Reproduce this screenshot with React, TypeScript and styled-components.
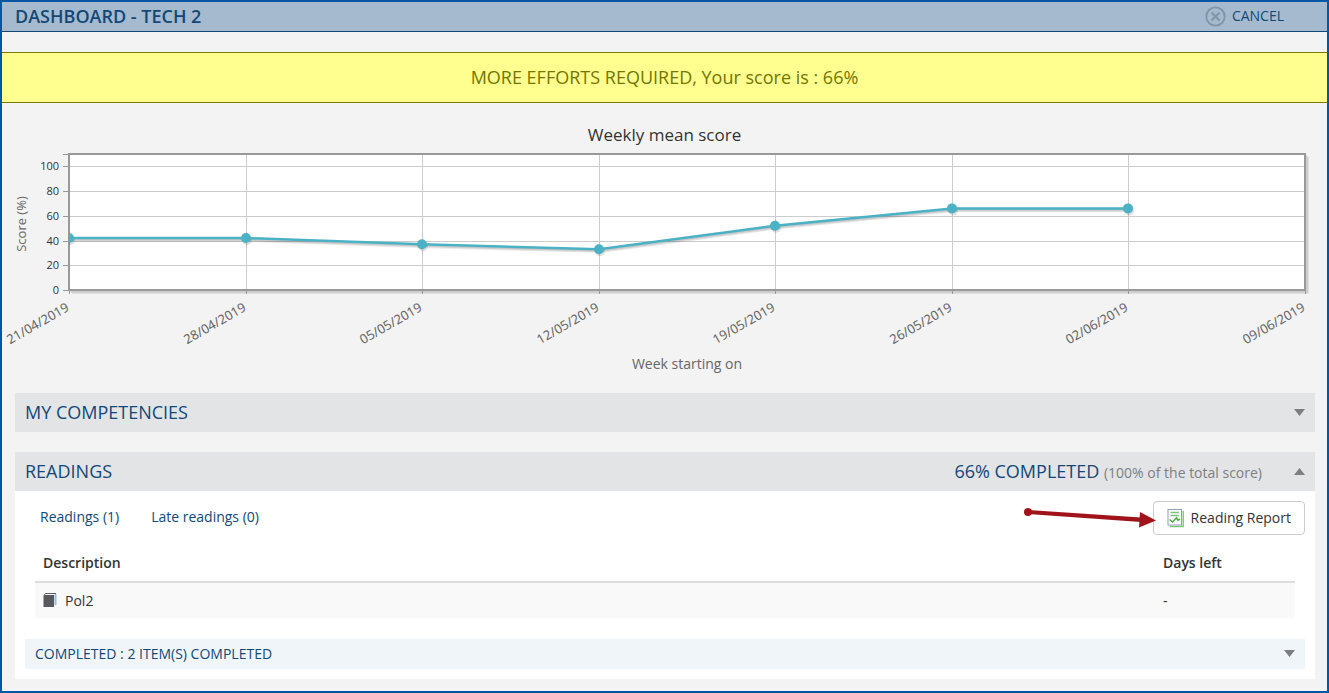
import React, { useLayoutEffect, useRef, useState } from "react";
import styled, { createGlobalStyle } from "styled-components";

const colors = {
  frame: "#0058a5",
  navy: "#124877",
  bar: "#a5bace",
  page: "#f3f3f3",
  section: "#e2e4e6",
  grid: "#cccccc",
  axis: "#999999",
  muted: "#7d7f82",
  text: "#333333",
  line: "#4bb2c5",
  arrow: "#a0131b",
};

const GlobalStyle = createGlobalStyle`
  *, *::before, *::after { box-sizing: border-box; }
  body {
    margin: 0;
    background: ${colors.page};
    color: ${colors.text};
    font-family: "Open Sans", "Noto Sans", sans-serif;
    font-size: 14px;
    line-height: 20px;
  }
  button { font: inherit; color: inherit; background: none; border: 0; padding: 0; cursor: pointer; }
  a { color: inherit; text-decoration: none; }
  svg { display: block; }
`;

const Page = styled.div`
  min-height: 100vh;
  border: 2px solid ${colors.frame};
`;

const TitleBar = styled.header`
  display: flex;
  align-items: center;
  justify-content: space-between;
  height: 30px;
  padding: 0 43px 1px 13px;
  background: ${colors.bar};
  border-bottom: 1px solid ${colors.navy};
  color: ${colors.navy};
`;

const Title = styled.h1`
  margin: 0;
  font-size: 18px;
  line-height: 26px;
  font-weight: 600;
`;

const CancelButton = styled.button`
  display: flex;
  align-items: center;
  gap: 6px;
`;

const ScoreBanner = styled.p`
  margin: 20px 0 0;
  padding: 12px;
  background: #ffff8f;
  border: solid #7a7a00;
  border-width: 1px 0;
  color: #757500;
  font-size: 18px;
  line-height: 25px;
  text-align: center;
`;

const ChartSection = styled.section`
  padding-top: 20px;
`;

const ChartTitle = styled.h2`
  margin: 0;
  font-size: 17px;
  line-height: 24px;
  font-weight: 400;
  text-align: center;
`;

const ChartCanvas = styled.svg`
  width: 100%;
  height: 230px;
`;

const Content = styled.main`
  padding: 16px 12px 12px 13px;
  display: flex;
  flex-direction: column;
  gap: 20px;
`;

const SectionHeader = styled.button`
  display: flex;
  align-items: center;
  gap: 32px;
  width: 100%;
  height: 39px;
  padding: 0 10px;
  background: ${colors.section};
  color: ${colors.navy};
  text-align: left;
`;

const SectionName = styled.span`
  flex: 1;
  padding-bottom: 2px;
  font-size: 18px;
  line-height: 24px;
`;

const SectionStatus = styled.span`
  font-size: 18px;
  line-height: 24px;

  small {
    font-size: 14px;
    color: ${colors.muted};
  }
`;

const PanelBody = styled.div`
  padding: 10px;
  background: #ffffff;
`;

const Toolbar = styled.div`
  position: relative;
  display: flex;
  align-items: center;
  justify-content: space-between;
`;

const Filters = styled.nav`
  display: flex;
  gap: 32px;
  padding: 0 0 2px 15px;
  color: ${colors.navy};
`;

const ReportButton = styled.button`
  display: flex;
  align-items: center;
  gap: 6px;
  height: 34px;
  padding: 0 13px;
  border: 1px solid #cccccc;
  border-radius: 4px;
  background: #ffffff;
`;

const Pointer = styled.svg`
  position: absolute;
  right: 148px;
  top: 4px;
`;

const TableWrap = styled.div`
  padding: 8px 10px 0;
`;

const Table = styled.table`
  width: 100%;
  border-collapse: collapse;
  table-layout: fixed;
`;

const HeadCell = styled.th<{ $width?: string }>`
  width: ${(p) => p.$width ?? "auto"};
  height: 39px;
  padding: 2px 8px 0;
  border-bottom: 2px solid #dddddd;
  font-weight: 600;
  text-align: left;
`;

const Cell = styled.td`
  height: 36px;
  padding: 0 8px;
  background: #f9f9f9;
`;

const ItemLink = styled.a`
  display: flex;
  align-items: center;
  gap: 8px;
`;

const CompletedBar = styled.button`
  display: flex;
  align-items: center;
  justify-content: space-between;
  width: 100%;
  height: 30px;
  margin-top: 21px;
  padding: 0 10px 1px;
  background: #f0f5fa;
  color: ${colors.navy};
`;

function Caret({ up = false }: { up?: boolean }) {
  return (
    <svg width="11" height="7" viewBox="0 0 11 7" fill={colors.muted} aria-hidden="true">
      <path d={up ? "M0 7L5.5 0L11 7z" : "M0 0H11L5.5 7z"} />
    </svg>
  );
}

function CancelIcon() {
  return (
    <svg width="21" height="21" viewBox="0 0 21 21" fill="none" stroke="#8394a5" aria-hidden="true">
      <circle cx="10.5" cy="10.5" r="9.2" strokeWidth="1.8" />
      <path d="M6.5 6.5L14.5 14.5M14.5 6.5L6.5 14.5" strokeWidth="2" />
    </svg>
  );
}

function ReportIcon() {
  return (
    <svg width="18" height="20" viewBox="0 0 18 20" fill="none" aria-hidden="true">
      <path d="M16.2 3V18.5H3" stroke="#7cc576" strokeWidth="1.4" />
      <rect x="1" y="1.5" width="13.5" height="15.5" fill="#ffffff" stroke="#93a0b3" />
      <path d="M3.5 4.5H12M3.5 7.5H12" stroke="#7cc576" strokeWidth="1.4" />
      <path d="M2.5 11.5L5.5 14L9.5 9.8L11 12.2L13 11.2" stroke="#4cae45" strokeWidth="1.5" />
    </svg>
  );
}

function BookIcon() {
  return (
    <svg width="14" height="15" viewBox="0 0 14 15" aria-hidden="true">
      <path d="M12.5 1V12" stroke="#8fc0e6" strokeWidth="2" />
      <path d="M1 2.5L2.5 .5H13" fill="none" stroke="#5c5e63" />
      <path d="M0.5 2.5L2 2H11V14H0.5z" fill="#58595e" />
    </svg>
  );
}

const weeks = ["21/04/2019", "28/04/2019", "05/05/2019", "12/05/2019", "19/05/2019", "26/05/2019", "02/06/2019", "09/06/2019"];
const scores = [42, 42, 37, 33, 52, 66, 66];
const ticks = [0, 20, 40, 60, 80, 100];

function ScoreChart() {
  const ref = useRef<SVGSVGElement>(null);
  const [width, setWidth] = useState(1200);

  useLayoutEffect(() => {
    const node = ref.current;
    if (!node) return;
    const measure = () => setWidth(node.getBoundingClientRect().width);
    measure();
    const observer = new ResizeObserver(measure);
    observer.observe(node);
    return () => observer.disconnect();
  }, []);

  const left = 67;
  const right = width - 22;
  const top = 7;
  const bottom = 143;
  const x = (i: number) => Math.round(left + ((right - left) * i) / (weeks.length - 1));
  const y = (v: number) => bottom - (v * (bottom - top)) / 110;
  const points = scores.map((s, i) => `${x(i)},${y(s)}`).join(" ");

  return (
    <ChartCanvas ref={ref} role="img" aria-label="Weekly mean score">
      <defs>
        <clipPath id="plot">
          <rect x={left} y={top} width={right - left} height={bottom - top} />
        </clipPath>
      </defs>
      <rect x={left} y={top} width={right - left} height={bottom - top} fill="#ffffff" />
      <g stroke={colors.grid}>
        {ticks.slice(1).map((t) => (
          <line key={t} x1={left} x2={right} y1={Math.round(y(t)) + 0.5} y2={Math.round(y(t)) + 0.5} />
        ))}
        {weeks.slice(1, -1).map((w, i) => (
          <line key={w} x1={x(i + 1) + 0.5} x2={x(i + 1) + 0.5} y1={top} y2={bottom} />
        ))}
      </g>
      <g fill="none" stroke="#000000" strokeOpacity="0.08" strokeWidth="2">
        {[1, 2, 3].map((d) => (
          <path key={d} d={`M${right + d} ${top + d}V${bottom + d}H${left + d}`} />
        ))}
      </g>
      <rect x={left} y={top} width={right - left} height={bottom - top} fill="none" stroke={colors.axis} strokeWidth="2" />
      <g stroke={colors.axis}>
        {[...ticks, 110].map((t) => (
          <line key={t} x1={left - 6} x2={left} y1={Math.round(y(t)) + 0.5} y2={Math.round(y(t)) + 0.5} />
        ))}
        {weeks.map((w, i) => (
          <line key={w} x1={x(i) + 0.5} x2={x(i) + 0.5} y1={bottom} y2={bottom + 4} />
        ))}
      </g>
      <g fill={colors.text} fontSize="11" textAnchor="end">
        {ticks.map((t) => (
          <text key={t} x={left - 10} y={Math.round(y(t)) + 4}>{t}</text>
        ))}
      </g>
      <g clipPath="url(#plot)">
        <g stroke="#000000" strokeOpacity="0.08" fill="none" strokeWidth="3">
          {[1, 2, 3].map((d) => (
            <polyline key={d} points={points} transform={`translate(${d * 0.6} ${d * 0.8})`} />
          ))}
        </g>
        <g fill="#000000" fillOpacity="0.12">
          {scores.map((s, i) => (
            <circle key={weeks[i]} cx={x(i) + 1} cy={y(s) + 2} r="5" />
          ))}
        </g>
        <polyline points={points} fill="none" stroke={colors.line} strokeWidth="2.5" />
        {scores.map((s, i) => (
          <circle key={weeks[i]} cx={x(i)} cy={y(s)} r="5" fill={colors.line} />
        ))}
      </g>
      <g fill="#666666" fontFamily="Noto Sans, sans-serif" fontSize="13" textAnchor="end">
        {weeks.map((w, i) => (
          <text key={w} transform={`translate(${x(i) + 1} 163) rotate(-30)`}>{w}</text>
        ))}
      </g>
      <g fill="#666666" textAnchor="middle">
        <text fontSize="14" x={(left + right) / 2} y="222">Week starting on</text>
        <text fontSize="13" transform={`translate(24 ${(top + bottom) / 2 + 2}) rotate(-90)`}>Score (%)</text>
      </g>
    </ChartCanvas>
  );
}

export default function App() {
  return (
    <>
      <GlobalStyle />
      <Page>
        <TitleBar>
          <Title>DASHBOARD - TECH 2</Title>
          <CancelButton type="button">
            <CancelIcon />
            CANCEL
          </CancelButton>
        </TitleBar>
        <ScoreBanner>MORE EFFORTS REQUIRED, Your score is : 66%</ScoreBanner>
        <ChartSection>
          <ChartTitle>Weekly mean score</ChartTitle>
          <ScoreChart />
        </ChartSection>
        <Content>
          <SectionHeader type="button" aria-expanded="false">
            <SectionName>MY COMPETENCIES</SectionName>
            <Caret />
          </SectionHeader>
          <section>
            <SectionHeader type="button" aria-expanded="true">
              <SectionName>READINGS</SectionName>
              <SectionStatus>
                66% COMPLETED <small>(100% of the total score)</small>
              </SectionStatus>
              <Caret up />
            </SectionHeader>
            <PanelBody>
              <Toolbar>
                <Filters aria-label="Readings filter">
                  <a href="#readings">Readings (1)</a>
                  <a href="#late">Late readings (0)</a>
                </Filters>
                <ReportButton type="button">
                  <ReportIcon />
                  Reading Report
                </ReportButton>
                <Pointer width="134" height="24" viewBox="0 0 134 24" aria-hidden="true">
                  <circle cx="5" cy="7" r="4" fill={colors.arrow} />
                  <path d="M5 5L118 12.5V17L5 9z" fill={colors.arrow} />
                  <path d="M117 7L133 15.5L116 22.5z" fill={colors.arrow} />
                </Pointer>
              </Toolbar>
              <TableWrap>
                <Table>
                  <thead>
                    <tr>
                      <HeadCell scope="col">Description</HeadCell>
                      <HeadCell scope="col" $width="140px">Days left</HeadCell>
                    </tr>
                  </thead>
                  <tbody>
                    <tr>
                      <Cell>
                        <ItemLink href="#pol2">
                          <BookIcon />
                          Pol2
                        </ItemLink>
                      </Cell>
                      <Cell>-</Cell>
                    </tr>
                  </tbody>
                </Table>
              </TableWrap>
              <CompletedBar type="button" aria-expanded="false">
                COMPLETED : 2 ITEM(S) COMPLETED
                <Caret />
              </CompletedBar>
            </PanelBody>
          </section>
        </Content>
      </Page>
    </>
  );
}
